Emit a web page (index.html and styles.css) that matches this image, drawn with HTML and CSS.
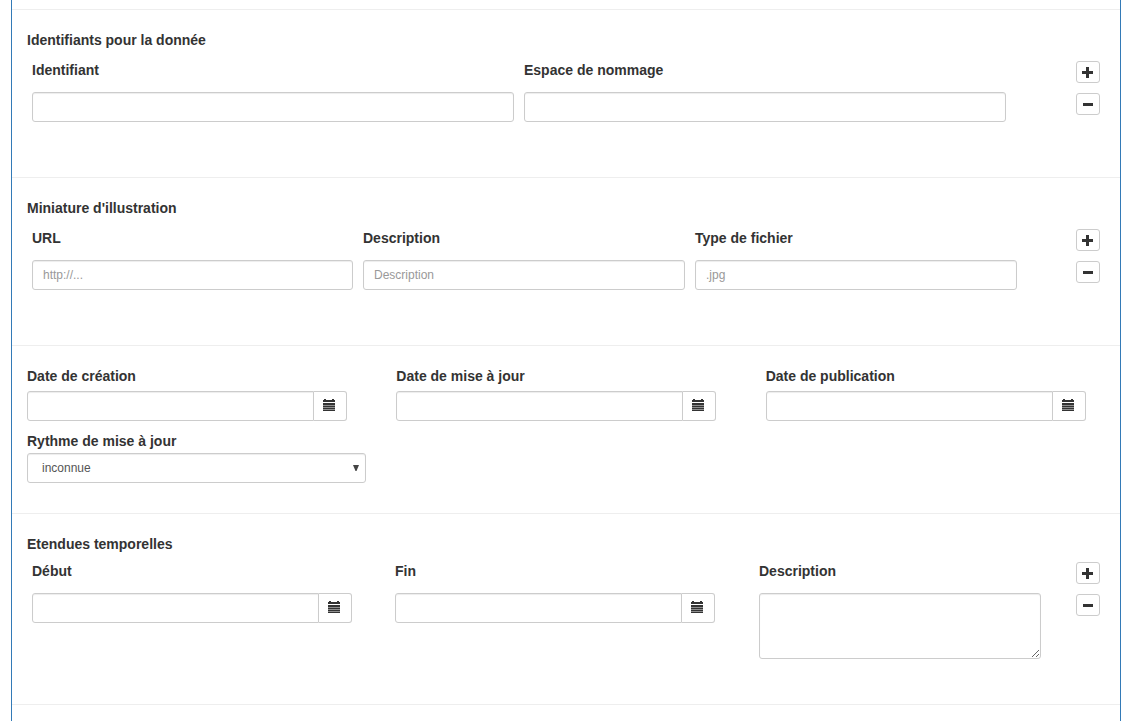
FILE: index.html
```html
<!DOCTYPE html>
<html lang="fr">
<head>
<meta charset="utf-8">
<meta name="viewport" content="width=device-width, initial-scale=1">
<title>Métadonnées</title>
<link rel="stylesheet" href="styles.css">
</head>
<body>
<svg class="sprite" aria-hidden="true">
  <symbol id="calendar" viewBox="0 0 12 12">
    <path d="M0 1h1V0h2v1h6V0h2v1h1v2H0z M0 4h12v2H0z M0 7h12v1H0z M0 9h12v1H0z M0 11h12v1H0z"/>
    <path d="M0 6h12v6H0z" opacity=".55"/>
  </symbol>
  <symbol id="plus" viewBox="0 0 12 12"><path d="M4 1h3v4h4v3H7v4H4V8H0V5h4z"/></symbol>
  <symbol id="minus" viewBox="0 0 12 12"><path d="M1 5h10v3H1z"/></symbol>
</svg>
<form class="panel">
  <fieldset class="section">
    <legend class="title">Identifiants pour la donnée</legend>
    <div class="row row-two">
      <div class="field"><label for="ident">Identifiant</label><input class="control" id="ident" type="text"></div>
      <div class="field"><label for="ns">Espace de nommage</label><input class="control" id="ns" type="text"></div>
      <div class="actions">
        <button type="button" aria-label="Ajouter"><svg><use href="#plus"/></svg></button>
        <button type="button" aria-label="Retirer"><svg><use href="#minus"/></svg></button>
      </div>
    </div>
  </fieldset>
  <fieldset class="section">
    <legend class="title">Miniature d'illustration</legend>
    <div class="row row-three">
      <div class="field"><label for="url">URL</label><input class="control" id="url" type="text" placeholder="http://..."></div>
      <div class="field"><label for="desc">Description</label><input class="control" id="desc" type="text" placeholder="Description"></div>
      <div class="field"><label for="type">Type de fichier</label><input class="control" id="type" type="text" placeholder=".jpg"></div>
      <div class="actions">
        <button type="button" aria-label="Ajouter"><svg><use href="#plus"/></svg></button>
        <button type="button" aria-label="Retirer"><svg><use href="#minus"/></svg></button>
      </div>
    </div>
  </fieldset>
  <div class="section dates">
    <div><label for="created">Date de création</label>
      <div class="date"><input class="control" id="created" type="text"><button type="button" aria-label="Calendrier"><svg><use href="#calendar"/></svg></button></div></div>
    <div><label for="updated">Date de mise à jour</label>
      <div class="date"><input class="control" id="updated" type="text"><button type="button" aria-label="Calendrier"><svg><use href="#calendar"/></svg></button></div></div>
    <div><label for="published">Date de publication</label>
      <div class="date"><input class="control" id="published" type="text"><button type="button" aria-label="Calendrier"><svg><use href="#calendar"/></svg></button></div></div>
    <div class="rhythm"><label for="rhythm">Rythme de mise à jour</label>
      <div class="select"><select class="control" id="rhythm"><option>inconnue</option></select><svg class="arrow" viewBox="0 0 6 6"><path d="M0 0h6L3.500 6h-1z"/></svg></div></div>
  </div>
  <fieldset class="section">
    <legend class="title">Etendues temporelles</legend>
    <div class="row row-extent">
      <div class="field"><label for="start">Début</label>
        <div class="date"><input class="control" id="start" type="text"><button type="button" aria-label="Calendrier"><svg><use href="#calendar"/></svg></button></div></div>
      <div class="field"><label for="end">Fin</label>
        <div class="date"><input class="control" id="end" type="text"><button type="button" aria-label="Calendrier"><svg><use href="#calendar"/></svg></button></div></div>
      <div class="field"><label for="extent">Description</label><textarea class="control" id="extent"></textarea></div>
      <div class="actions">
        <button type="button" aria-label="Ajouter"><svg><use href="#plus"/></svg></button>
        <button type="button" aria-label="Retirer"><svg><use href="#minus"/></svg></button>
      </div>
    </div>
  </fieldset>
  <hr class="end">
</form>
</body>
</html>
```
FILE: styles.css
```css
* { box-sizing: border-box; }
body {
  margin: 0;
  background: #fff;
  color: #333;
  font: 14px/20px "Liberation Sans", Arial, sans-serif;
}
.sprite { position: absolute; width: 0; height: 0; }
.panel {
  min-height: 100vh;
  margin: 0 11px;
  padding-top: 9px;
  border: solid #337ab7;
  border-width: 0 1px;
}
.section {
  min-width: 0;
  margin: 0;
  padding: 20px 15px 55px;
  border: 0;
  border-top: 1px solid #eee;
}
.title { float: left; width: 100%; padding: 0; font-weight: bold; }
label { display: block; font-weight: bold; }
.row { clear: both; display: grid; padding: 10px 5px 0; }
.row-two { grid-template-columns: 1fr 1fr 84px; column-gap: 10px; }
.row-three { grid-template-columns: 321fr 322fr 322fr 73px; column-gap: 10px; }
.row-extent { grid-template-columns: 363fr 364fr 282fr 59px; padding-top: 7px; }
.field { display: flex; flex-direction: column; gap: 12px; min-width: 0; }
.control {
  display: block;
  width: 100%;
  min-width: 0;
  height: 30px;
  margin: 0;
  padding: 5px 10px;
  border: 1px solid #ccc;
  border-radius: 3px;
  background: #fff;
  box-shadow: inset 0 1px 1px rgba(0, 0, 0, .075);
  color: #555;
  font: 12px/18px "Liberation Sans", Arial, sans-serif;
}
.control::placeholder { color: #999; opacity: 1; }
textarea.control { height: 66px; resize: vertical; }
button {
  display: flex;
  align-items: center;
  justify-content: center;
  padding: 0;
  border: 1px solid #ccc;
  border-radius: 3px;
  background: #fff;
  color: #333;
}
button svg { flex: none; width: 12px; height: 12px; fill: currentColor; }
.actions { display: flex; flex-direction: column; align-items: flex-end; gap: 10px; padding-top: 1px; }
.actions button { width: 24px; height: 22px; }
.date { display: flex; max-width: 320px; }
.date .control { flex: 1; border-radius: 3px 0 0 3px; }
.date button { width: 33px; height: 30px; padding: 0 2px 2px 0; border-left: 0; border-radius: 0 3px 3px 0; }
.dates { display: grid; grid-template-columns: repeat(3, 1fr); gap: 10px 30px; padding-bottom: 30px; }
.dates .date { margin-top: 5px; }
.rhythm { grid-column: 1; }
.select { position: relative; margin-top: 2px; }
.select .control { appearance: none; padding-left: 14px; }
.arrow { position: absolute; top: 12px; right: 7px; width: 6px; height: 6px; fill: #444; pointer-events: none; }
.end { margin: 0; border: 0; border-top: 1px solid #eee; }
fieldset.section:last-of-type { padding-bottom: 45px; }
```
